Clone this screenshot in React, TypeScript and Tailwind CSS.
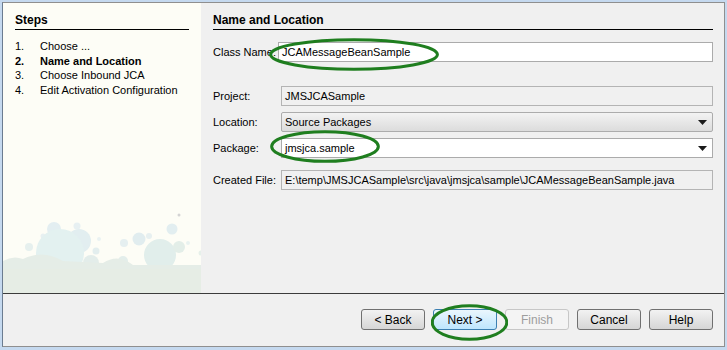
import type { ReactNode } from 'react'

const font = { fontFamily: '"Liberation Sans", Arial, sans-serif' }

function Arrow() {
  return (
    <svg width="9" height="5" viewBox="0 0 9 5" className="mr-[5px] shrink-0">
      <path d="M0 0h9L4.5 5z" fill="#1a1a1a" />
    </svg>
  )
}

// ellipse marks drawn over the form
function Ring({ className }: { className: string }) {
  return (
    <svg className={`pointer-events-none absolute ${className}`} viewBox="0 0 100 40" preserveAspectRatio="none">
      <ellipse cx="50" cy="20" rx="48.5" ry="18" fill="none" stroke="#1f7e1f" strokeWidth="3" vectorEffect="non-scaling-stroke" />
    </svg>
  )
}

function Row({ label, children, top }: { label: string; children: ReactNode; top: string }) {
  return (
    <div className={`flex h-[20px] items-center ${top}`}>
      <span className="w-[68px] shrink-0">{label}</span>
      {children}
    </div>
  )
}

function Bubbles() {
  const circles: [number, number, number, string][] = [
    [51, 48, 7, '#e3eef1'],
    [74, 45, 3.5, '#e7f0f2'],
    [40, 55, 2.5, '#e8f0f1'],
    [76, 60, 12, '#e2eef0'],
    [57, 72, 24, '#e3f1f0'],
    [26, 66, 4, '#e6f0ee'],
    [96, 58, 2, '#eaf2f2'],
    [93, 70, 3.5, '#e3eeee'],
    [88, 82, 8, '#e3edea'],
    [121, 62, 4, '#e5eff0'],
    [136, 58, 6.5, '#e1edef'],
    [146, 55, 3, '#e7f0f0'],
    [120, 80, 5, '#e3eeeb'],
    [169, 48, 5.5, '#e2eef0'],
    [157, 74, 16, '#e1eeeb'],
    [185, 62, 2, '#e9f2f0'],
    [176, 66, 6, '#e3eee8'],
    [198, 72, 2.5, '#e6f0ea'],
  ]
  return (
    <svg width="198" height="112" viewBox="0 0 198 112" className="mt-auto block">
      {circles.map(([cx, cy, r, c], i) => (
        <circle key={i} cx={cx} cy={cy} r={r} fill={c} />
      ))}
      <path d="M0 80 Q10 74 20 78 Q40 68 60 80 L100 82 Q115 72 130 84 L198 84 L198 112 L0 112z" fill="#e5ede7" />
      <rect x="0" y="88" width="198" height="24" fill="#e6ede5" />
      <circle cx="176" cy="34" r="1.5" fill="#d4d4d4" />
    </svg>
  )
}

function Btn({ children, variant }: { children: ReactNode; variant?: 'default' | 'off' }) {
  const tone =
    variant === 'default'
      ? 'border-[#3c7fb1] bg-gradient-to-b from-[#eaf6fd] to-[#bee6fd] text-black'
      : variant === 'off'
        ? 'border-[#c7c7c7] bg-[#f4f4f4] text-[#9d9d9d]'
        : 'border-[#707070] bg-gradient-to-b from-[#f2f2f2] to-[#d6d6d6] text-black'
  return (
    <div className={`flex h-[21px] w-[64px] items-center justify-center rounded-[3px] border text-[12px] ${tone}`}>
      {children}
    </div>
  )
}

export default function App() {
  return (
    <div className="h-[350px] w-[727px] bg-[#c5d9ef] px-[2px] pb-[3px] pt-[2px] text-[11px] text-black" style={font}>
      <div className="relative flex h-full flex-col border border-[#8f8f8f] border-l-[#6b7c90] bg-[#f0f0f0]">
        <div className="flex h-[290px]">
          <div className="flex w-[198px] flex-col bg-[#fdfdf6]">
            <div className="mx-[12px] mt-[10px] border-b border-black pb-[1px] text-[12px] font-bold leading-[15px]">Steps</div>
            <ol className="ml-[12px] mt-[9px] leading-[14.5px]">
              <li className="flex"><span className="w-[25px]">1.</span>Choose ...</li>
              <li className="flex font-bold"><span className="w-[25px]">2.</span>Name and Location</li>
              <li className="flex"><span className="w-[25px]">3.</span>Choose Inbound JCA</li>
              <li className="flex"><span className="w-[25px]">4.</span>Edit Activation Configuration</li>
            </ol>
            <Bubbles />
          </div>
          <div className="flex-1 pl-[12px] pr-[11px]">
            <div className="mt-[10px] border-b border-black pb-[1px] text-[12px] font-bold leading-[15px]">Name and Location</div>
            <div className="mt-[12px] flex h-[20px] items-center">
              <span className="w-[65px] shrink-0">Class Name:</span>
              <div className="flex h-full flex-1 items-center border border-[#ababab] bg-white pl-[3px]">JCAMessageBeanSample</div>
            </div>
            <Row label="Project:" top="mt-[24px]">
              <div className="flex h-full flex-1 items-center border border-[#b4b4b4] bg-[#f0f0f0] pl-[3px]">JMSJCASample</div>
            </Row>
            <Row label="Location:" top="mt-[6px]">
              <div className="flex h-full flex-1 items-center justify-between rounded-[2px] border border-[#acacac] bg-gradient-to-b from-[#f3f3f3] to-[#dcdcdc] pl-[3px]">
                Source Packages
                <Arrow />
              </div>
            </Row>
            <Row label="Package:" top="mt-[6px]">
              <div className="flex h-full flex-1 items-center justify-between border border-[#ababab] bg-white pl-[3px]">
                jmsjca.sample
                <Arrow />
              </div>
            </Row>
            <Row label="Created File:" top="mt-[12px]">
              <div className="flex h-full flex-1 items-center border border-[#b4b4b4] bg-[#f0f0f0] pl-[3px]">
                E:\temp\JMSJCASample\src\java\jmsjca\sample\JCAMessageBeanSample.java
              </div>
            </Row>
          </div>
        </div>
        <div className="border-t border-[#3c3c3c]" />
        <div className="flex flex-1 items-center justify-end gap-[8px] pb-[1px] pr-[11px]">
          <Btn>&lt; Back</Btn>
          <Btn variant="default">Next &gt;</Btn>
          <Btn variant="off">Finish</Btn>
          <Btn>Cancel</Btn>
          <Btn>Help</Btn>
        </div>
        <Ring className="left-[265px] top-[35px] h-[33px] w-[172px]" />
        <Ring className="left-[267px] top-[127px] h-[33px] w-[110px]" />
        <Ring className="left-[428px] top-[301px] h-[37px] w-[77px]" />
      </div>
    </div>
  )
}
